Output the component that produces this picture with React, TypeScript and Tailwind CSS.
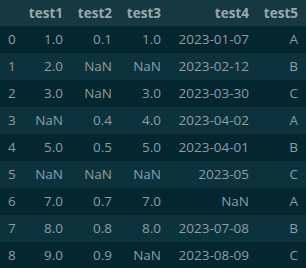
const rows: string[][] = [
  ["0", "1.0", "0.1", "1.0", "2023-01-07", "A"],
  ["1", "2.0", "NaN", "NaN", "2023-02-12", "B"],
  ["2", "3.0", "NaN", "3.0", "2023-03-30", "C"],
  ["3", "NaN", "0.4", "4.0", "2023-04-02", "A"],
  ["4", "5.0", "0.5", "5.0", "2023-04-01", "B"],
  ["5", "NaN", "NaN", "NaN", "2023-05", "C"],
  ["6", "7.0", "0.7", "7.0", "NaN", "A"],
  ["7", "8.0", "0.8", "8.0", "2023-07-08", "B"],
  ["8", "9.0", "0.9", "NaN", "2023-08-09", "C"],
];

const headers = ["", "test1", "test2", "test3", "test4", "test5"];

export default function App() {
  return (
    <div className="w-[306px] h-[268px] overflow-hidden bg-[#03262f] font-['Open_Sans',sans-serif] text-[13.5px]">
      <div className="grid grid-cols-[24px_47px_49px_49px_88px_49px] h-[26px] bg-[#163840] text-[#96a9ae] font-bold items-center">
        {headers.map((h, i) => (
          <div key={i} className="pr-2 text-right">
            {h}
          </div>
        ))}
      </div>
      {rows.map((r, ri) => (
        <div
          key={ri}
          className={`grid grid-cols-[24px_47px_49px_49px_88px_49px] h-[27px] items-center text-[#8a9ea3] ${
            ri % 2 === 1 ? "bg-[#0c333b]" : "bg-[#03262f]"
          }`}
        >
          {r.map((c, ci) => (
            <div key={ci} className={ci === 0 ? "pl-2" : "pr-2 text-right"}>
              {c}
            </div>
          ))}
        </div>
      ))}
    </div>
  );
}
